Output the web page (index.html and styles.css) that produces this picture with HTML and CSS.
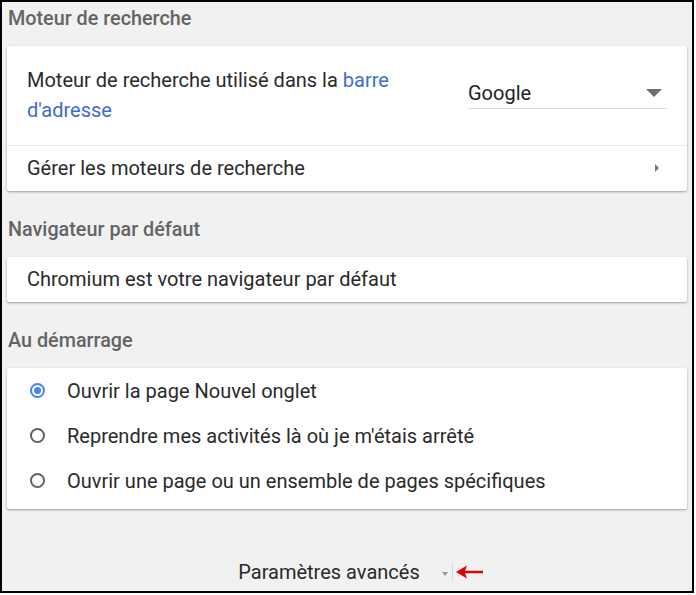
FILE: index.html
```html
<!DOCTYPE html>
<html lang="fr">
<head>
<meta charset="utf-8">
<link rel="stylesheet" href="styles.css">
</head>
<body>
<div class="frame">
  <h2 class="section-title first">Moteur de recherche</h2>
  <div class="card">
    <div class="row row-engine">
      <div class="engine-label">Moteur de recherche utilisé dans la <a class="link" href="#">barre d'adresse</a></div>
      <div class="select">
        <span class="select-value">Google</span>
        <span class="select-arrow"></span>
      </div>
    </div>
    <div class="row row-link">
      <span>Gérer les moteurs de recherche</span>
      <span class="subpage-arrow"></span>
    </div>
  </div>

  <h2 class="section-title">Navigateur par défaut</h2>
  <div class="card">
    <div class="row">Chromium est votre navigateur par défaut</div>
  </div>

  <h2 class="section-title">Au démarrage</h2>
  <div class="card card-radios">
    <div class="radio-row"><span class="radio checked"></span><span>Ouvrir la page Nouvel onglet</span></div>
    <div class="radio-row"><span class="radio"></span><span>Reprendre mes activités là où je m'étais arrêté</span></div>
    <div class="radio-row"><span class="radio"></span><span>Ouvrir une page ou un ensemble de pages spécifiques</span></div>
  </div>

  <div class="footer">
    <div class="advanced">
      <span>Paramètres avancés</span>
      <span class="adv-arrow"></span>
      <span class="annotation">
        <span class="cursor-line"></span>
        <svg width="30" height="16" viewBox="0 0 30 16"><path d="M1 8 L12 1.5 L10 6.8 L28 6.8 L28 9.2 L10 9.2 L12 14.5 Z" fill="#e00000"/></svg>
      </span>
    </div>
  </div>
</div>
</body>
</html>
```

FILE: styles.css
```css
html, body {
  margin: 0;
  padding: 0;
  background: #ffffff;
}
body {
  font-family: Roboto, "Liberation Sans", Arial, sans-serif;
  color: #2a2a2a;
}
.frame {
  width: 690px;
  height: 589px;
  border: 2px solid #000000;
  background: #f1f1f1;
  display: flex;
  flex-direction: column;
}
.section-title {
  margin: 27px 0 15px 6px;
  font-size: 19.8px;
  line-height: 24px;
  font-weight: 500;
  color: #646464;
}
.section-title.first {
  margin-top: 5px;
}
.card {
  margin: 0 5px;
  background: #ffffff;
  border-radius: 2px;
  box-shadow: 0 1px 2px rgba(0,0,0,0.25), 0 1px 3px rgba(0,0,0,0.12);
}
.row {
  font-size: 20px;
  line-height: 24px;
  padding: 10px 20px 11px 20px;
  display: flex;
  align-items: center;
}
.row-engine {
  padding: 19px 20px 20px 20px;
  border-bottom: 1px solid #ebebeb;
}
.engine-label {
  width: 400px;
  line-height: 30px;
}
.link {
  color: #3f6bce;
  text-decoration: none;
}
.select {
  margin-left: auto;
  width: 199px;
  margin-right: 0;
  border-bottom: 1px solid #dcdcdc;
  display: flex;
  align-items: center;
  height: 30px;
  position: relative;
  top: -2px;
}
.select-value {
  color: #222222;
  line-height: 24px;
}
.select-arrow {
  margin-left: auto;
  margin-right: 5px;
  width: 0;
  height: 0;
  border-left: 8px solid transparent;
  border-right: 8px solid transparent;
  border-top: 8px solid #6e6e6e;
}
.row-link {
  padding: 10px 20px 11px 20px;
}
.subpage-arrow {
  margin-left: auto;
  margin-right: 8px;
  width: 0;
  height: 0;
  border-top: 4px solid transparent;
  border-bottom: 4px solid transparent;
  border-left: 4px solid #777777;
}
.card-radios {
  padding-bottom: 6px;
}
.radio-row {
  height: 45px;
  display: flex;
  align-items: center;
  font-size: 20px;
  padding-left: 23px;
}
.radio {
  width: 11px;
  height: 11px;
  border: 2px solid #5f5f5f;
  border-radius: 50%;
  margin-right: 22px;
  box-sizing: content-box;
  position: relative;
  flex: none;
}
.radio.checked {
  border-color: #4285f4;
}
.radio.checked::after {
  content: "";
  position: absolute;
  left: 2px;
  top: 2px;
  width: 7px;
  height: 7px;
  border-radius: 50%;
  background: #4285f4;
}
.footer {
  margin-top: auto;
  height: 38px;
  display: flex;
  justify-content: center;
  align-items: center;
  font-size: 20px;
}
.advanced {
  display: flex;
  align-items: center;
  position: relative;
  left: -4px;
}
.adv-arrow {
  margin-left: 22px;
  width: 0;
  height: 0;
  border-left: 3px solid transparent;
  border-right: 3px solid transparent;
  border-top: 4px solid #9a9a9a;
  position: relative;
  top: 2px;
}
.annotation {
  position: absolute;
  left: 100%;
  top: 50%;
  margin-top: -9px;
  margin-left: 4px;
  display: flex;
  align-items: center;
  height: 18px;
}
.cursor-line {
  width: 1px;
  height: 18px;
  background: #d6d6d6;
  margin-right: 2px;
}
.annotation svg {
  display: block;
}
```
